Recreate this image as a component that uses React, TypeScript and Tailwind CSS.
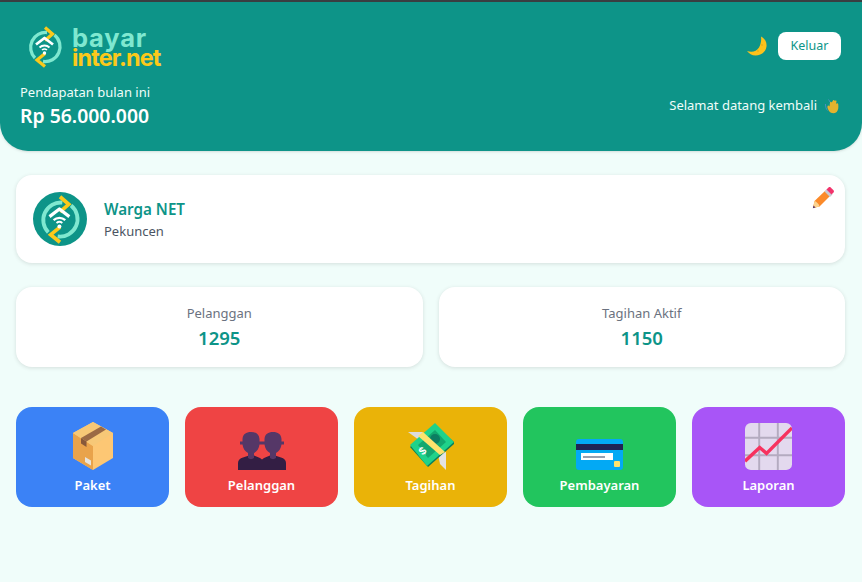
function LogoMark({ className }: { className?: string }) {
  return (
    <svg className={className} viewBox="0 0 36 42" fill="none">
      <path d="M20 6.500A15 15 0 0 0 8 32" stroke="#7fe8d0" strokeWidth="3.300" />
      <path d="M16 35.500A15 15 0 0 0 27.500 9" stroke="#7fe8d0" strokeWidth="3.300" />
      <path d="M18 1.500l7.500 6.500-7.500 6.500" stroke="#fbc91b" strokeWidth="3.200" />
      <path d="M18 27.500l-8 6.500 8 6.500" stroke="#fbc91b" strokeWidth="3.200" />
      <path d="M9 18.500l8.500-6.500 8.500 6.500" stroke="#fff" strokeWidth="2.800" strokeLinejoin="round" />
      <path d="M12.500 21.500a7.500 7.500 0 0 1 10 0" stroke="#fff" strokeWidth="2" />
      <path d="M15 24a4 4 0 0 1 5 0" stroke="#fff" strokeWidth="1.600" />
      <circle cx="17.500" cy="27" r="1.700" fill="#fff" />
    </svg>
  );
}

function MoonIcon() {
  return (
    <svg className="h-[20px] w-[20px]" viewBox="0 0 20 20">
      <path d="M14 .500c4 2 6 6 5.500 10C18.800 16 14 19.500 8.500 19.500 5 19.500 2 17.500 0 15c5 1.500 9.500.5 12-3.500 2-3.500 2.500-7.500 2-11z" fill="#fcc21b" />
      <circle cx="15" cy="9" r=".8" fill="#e5a50a" />
      <circle cx="11" cy="15" r=".8" fill="#e5a50a" />
    </svg>
  );
}

function WaveIcon() {
  return (
    <svg className="h-[16px] w-[15px]" viewBox="0 0 15 16">
      <path d="M.5 6c0 3 .7 5 2 6.500" stroke="#4a90c2" strokeWidth="1" fill="none" />
      <path d="M3.500 1.500c.8 1 1 1.500 1.500 2.500" stroke="#4a90c2" strokeWidth="1" fill="none" />
      <path d="M4 13C1.500 9 2.500 7.500 3.500 7.500l1 1L5 4.500c.3-1 1.500-1 1.700 0L8 2.500c.5-.8 1.700-.3 1.500.6l.9-.6c.8-.3 1.400.5 1 1.200l-.4 2.300c.5-1 2-1 2.200 0 .4 3 .3 6-1.500 8C9 16 6 15.500 4 13z" fill="#e5b32e" />
    </svg>
  );
}

function PencilIcon() {
  return (
    <svg className="h-[22px] w-[22px]" viewBox="0 0 22 22">
      <path d="M2.500 14L13.500 3.500 18.500 8.500 7.500 19.500 1 21z" fill="#fb8a2a" />
      <path d="M2.500 14L1 21l6.500-1.500C7.300 17.500 4.500 14.500 2.500 14z" fill="#fcd38f" />
      <path d="M1.500 18.500L.8 21.200l2.800-.6z" fill="#5b3a6a" />
      <path d="M12.500 4.500L15 2l5.500 5.500L18 10z" fill="#c9c9d4" />
      <path d="M14.500 2.500l2-2c.7-.6 1.500-.6 2.200 0l2.800 2.800c.6.7.6 1.500 0 2.200l-2 2z" fill="#f2336b" />
    </svg>
  );
}

function BoxIcon() {
  return (
    <svg className="h-[48px] w-[40px]" viewBox="0 0 40 48">
      <path d="M20 0L40 11v25L20 48 0 36V11z" fill="#fdc774" />
      <path d="M20 24L0 11v25l20 12z" fill="#e9a34b" />
      <path d="M0 11l20 13 20-13L20 0z" fill="#f7c877" />
      <path d="M8 16L28 4.500l5 3L13.500 19.500z" fill="#9b6a45" />
      <path d="M8 16l5.500 3.500V25L8 21.500z" fill="#87583a" />
      <path d="M12 35l6 3.500v5l-6-3.500z" fill="#e8e4dd" />
    </svg>
  );
}

function PeopleIcon() {
  return (
    <svg className="h-[38px] w-[48px]" viewBox="0 0 48 38">
      <path d="M0 38V31c0-3 2-4.500 5-5.500l6-2h5l6 2.500 2 1.500 2-1.500 6-2.500h5l6 2c3 1 5 2.500 5 5.500v7z" fill="#331e44" />
      <path d="M13 0c5 0 8 2 8.500 7v2.500H24v3h-2.500c-.5 4-2.500 7-5.500 8.500v5c-1.500 1.500-4.500 1.500-6 0v-5c-3-1.500-5-4.500-5.500-8.500H2v-3h2.500V7C5 2 8 0 13 0z" fill="#553767" />
      <path d="M35 0c5 0 8 2 8.500 7v2.500H46v3h-2.500c-.5 4-2.500 7-5.500 8.500v5c-1.500 1.500-4.500 1.500-6 0v-5c-3-1.500-5-4.500-5.500-8.500H24v-3h2.500V7C27 2 30 0 35 0z" fill="#553767" />
    </svg>
  );
}

function MoneyIcon() {
  return (
    <svg className="h-[47px] w-[46px]" viewBox="0 0 46 47">
      <path d="M0 9h15l-4 8z" fill="#dcdcdc" />
      <path d="M30 31l8-2v18l-6-6z" fill="#e3e3e3" />
      <path d="M2 24L27 2l19 17v2L20 44z" fill="#0a7e5c" />
      <path d="M2 22L27 0l19 19-27 24z" fill="#1fd28a" />
      <path d="M10 22L27 7l11 12-18 16z" fill="#12a86f" />
      <circle cx="27" cy="16" r="5" fill="#0c7d62" />
      <path d="M10 13l5-4 22 20-5 3z" fill="#fde36d" />
      <text x="11" y="31" fontSize="11" fontWeight="700" fill="#fff" fontFamily="'Liberation Sans', sans-serif" transform="rotate(-42 15 27)">$</text>
    </svg>
  );
}

function CardIcon() {
  return (
    <div className="flex h-[31px] w-[47px] flex-col rounded-[3px] bg-[#03a9f4]">
      <div className="mt-[5px] h-[6px] bg-[#1f2354]" />
      <div className="mt-[3px] ml-[5px] flex h-[7px] w-[32px] items-center bg-white pl-[2px]">
        <div className="h-[2px] w-[22px] bg-gray-400" />
      </div>
      <div className="mt-[1px] ml-[38px] h-[6px] w-[6px] rounded-[1px] bg-[#fde36d]" />
    </div>
  );
}

function ChartIcon() {
  return (
    <svg className="h-[47px] w-[47px]" viewBox="0 0 48 48">
      <rect width="48" height="48" rx="6" fill="#e3d9ee" />
      <path d="M14.500 0v48M33.500 0v48M0 15h48M0 33h48" stroke="#b4abc0" strokeWidth="2" />
      <path d="M0 39l15-14 7 6L48 5" stroke="#f7325f" strokeWidth="3.500" fill="none" />
    </svg>
  );
}

const menu = [
  { label: "Paket", color: "bg-[#3b82f6]", icon: <BoxIcon /> },
  { label: "Pelanggan", color: "bg-[#ef4444]", icon: <PeopleIcon /> },
  { label: "Tagihan", color: "bg-[#eab308]", icon: <MoneyIcon /> },
  { label: "Pembayaran", color: "bg-[#22c55e]", icon: <CardIcon /> },
  { label: "Laporan", color: "bg-[#a855f7]", icon: <ChartIcon /> },
];

const stats = [
  { label: "Pelanggan", value: "1295" },
  { label: "Tagihan Aktif", value: "1150" },
];

export default function App() {
  return (
    <div className="min-h-[582px] bg-[#f0fdfa] font-['Noto_Sans',sans-serif] text-[14px]">
      <div className="h-[2px] bg-[#3a3f42]" />
      <header className="flex h-[149px] flex-col rounded-b-[28px] bg-[#0d9488] px-[20px] shadow-sm">
        <div className="flex h-[64px] items-start justify-between">
          <div className="mt-[24px] flex items-center pl-[7px]">
            <LogoMark className="h-[42px] w-[36px]" />
            <div className="ml-[9px] flex flex-col font-['Inter',sans-serif] font-bold">
              <span className="h-[21px] text-[25.5px] leading-[21px] tracking-[0.8px] text-[#7fe8d0]">bayar</span>
              <span className="h-[20px] text-[23.5px] leading-[20px] tracking-[-0.9px] text-[#fbc91b]">inter.net</span>
            </div>
          </div>
          <div className="mt-[30px] flex items-center gap-[11px] pr-px">
            <MoonIcon />
            <button className="h-[28px] w-[63px] rounded-[8px] bg-white pt-px text-[12.5px] text-[#0d9488]">Keluar</button>
          </div>
        </div>
        <div className="mt-[17px] flex items-center justify-between">
          <div>
            <p className="text-[13px] leading-[18px] text-[#f0fdfa]">Pendapatan bulan ini</p>
            <p className="mt-[1px] text-[19.4px] leading-[27px] font-semibold text-white">Rp 56.000.000</p>
          </div>
          <div className="flex items-center gap-[8px] pr-[2px] text-[13px] text-[#f0fdfa]">
            <span>Selamat datang kembali</span>
            <WaveIcon />
          </div>
        </div>
      </header>

      <main className="mr-[17px] ml-[16px] flex flex-col pt-[24px]">
        <section className="relative flex h-[88px] items-center gap-[17px] rounded-[16px] bg-white pl-[17px] shadow-[0_1px_4px_rgba(0,0,0,0.12)]">
          <div className="flex h-[54px] w-[54px] items-center justify-center rounded-full bg-[#0d9488]">
            <LogoMark className="h-[49px] w-[42px]" />
          </div>
          <div>
            <p className="text-[15.2px] leading-[20px] font-semibold text-[#0d9488]">Warga NET</p>
            <p className="mt-[3px] text-[13px] leading-[18px] text-[#4b5563]">Pekuncen</p>
          </div>
          <div className="absolute top-[12px] right-[11px]">
            <PencilIcon />
          </div>
        </section>

        <section className="mt-[24px] grid grid-cols-2 gap-[16px]">
          {stats.map((s) => (
            <div key={s.label} className="flex h-[80px] flex-col items-center justify-center rounded-[16px] bg-white pt-[2px] shadow-[0_1px_4px_rgba(0,0,0,0.12)]">
              <p className="text-[13px] leading-[18px] text-[#6b7280]">{s.label}</p>
              <p className="mt-[2px] text-[18.5px] leading-[28px] font-semibold text-[#0d9488]">{s.value}</p>
            </div>
          ))}
        </section>

        <section className="mt-[40px] grid grid-cols-5 gap-[16px]">
          {menu.map((m) => (
            <div key={m.label} className={`flex h-[100px] flex-col items-center rounded-[16px] ${m.color}`}>
              <div className="flex h-[63px] items-end justify-center">{m.icon}</div>
              <p className="mt-[6px] text-[13px] leading-[18px] font-semibold text-white">{m.label}</p>
            </div>
          ))}
        </section>
      </main>
    </div>
  );
}
